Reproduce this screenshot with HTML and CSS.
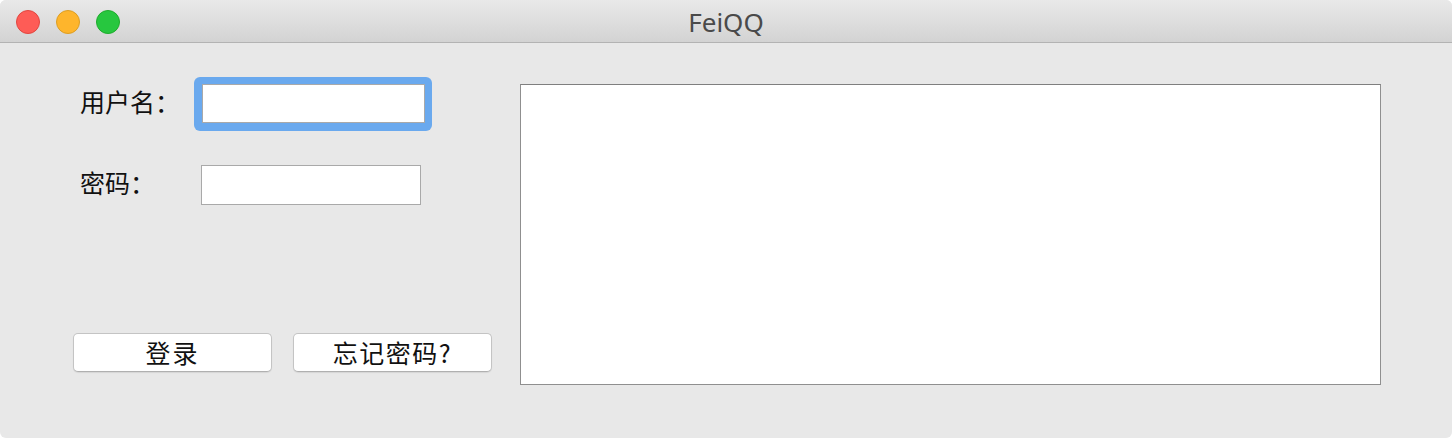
FILE: index.html
```html
<!DOCTYPE html>
<html lang="zh-CN">
<head>
<meta charset="utf-8">
<title>FeiQQ</title>
<link rel="stylesheet" href="styles.css">
</head>
<body>
<div class="window">
  <div class="titlebar">
    <div class="lights">
      <span class="light red"></span>
      <span class="light yellow"></span>
      <span class="light green"></span>
    </div>
    <div class="title">FeiQQ</div>
  </div>
  <div class="content">
    <div class="left">
      <div class="row row-user">
        <label class="label">用户名：</label>
        <span class="focus-ring"><input class="field field-user" type="text"></span>
      </div>
      <div class="row row-pass">
        <label class="label">密码：</label>
        <input class="field field-pass" type="password">
      </div>
      <div class="buttons">
        <button class="btn">登录</button>
        <button class="btn btn-wide">忘记密码?</button>
      </div>
    </div>
    <div class="textbox"></div>
  </div>
</div>
</body>
</html>
```

FILE: styles.css
```css
* { box-sizing: border-box; }
html, body {
  margin: 0;
  padding: 0;
  background: #ffffff;
}
body {
  font-family: "Noto Sans CJK SC", "Noto Sans", sans-serif;
  color: #000;
}
.window {
  width: 1452px;
  height: 438px;
  background: #e8e8e8;
  border-radius: 6px;
  overflow: hidden;
  display: flex;
  flex-direction: column;
}
.titlebar {
  height: 43px;
  flex: none;
  background: linear-gradient(#e9e9e9, #d3d3d3);
  border-bottom: 1px solid #b3b3b3;
  display: flex;
  align-items: center;
  position: relative;
}
.lights {
  display: flex;
  gap: 16px;
  padding-left: 16px;
  margin-top: 1px;
}
.light {
  width: 24px;
  height: 24px;
  border-radius: 50%;
  display: block;
}
.red { background: #fe5c56; border: 1px solid #e2463f; }
.yellow { background: #feb52c; border: 1px solid #dd9e22; }
.green { background: #27c73f; border: 1px solid #1eac2c; }
.title {
  position: absolute;
  left: 0;
  right: 0;
  top: 2px;
  bottom: 0;
  display: flex;
  align-items: center;
  justify-content: center;
  font-family: "Noto Sans", "Liberation Sans", sans-serif;
  font-size: 26px;
  color: #4a4a4a;
  pointer-events: none;
}
.content {
  flex: 1;
  display: flex;
  padding-left: 73px;
}
.left {
  width: 419px;
  display: flex;
  flex-direction: column;
}
.row {
  display: flex;
  align-items: center;
  padding-left: 7px;
}
.row-user { margin-top: 34px; }
.row-pass { margin-top: 34px; }
.label {
  font-size: 25px;
  line-height: 30px;
  margin-top: -6px;
  color: #111;
}
.row-user .label { width: 114px; }
.row-pass .label { width: 121px; }
.focus-ring {
  display: block;
  background: #6aa9ee;
  padding: 7px 7px 8px 8px;
  border-radius: 6px;
}
.field {
  display: block;
  margin: 0;
  background: #fff;
  border: 1px solid #a9a9a9;
  outline: none;
  padding: 0 4px;
  font-size: 18px;
}
.field-user { width: 223px; height: 39px; }
.field-pass { width: 220px; height: 40px; }
.buttons {
  display: flex;
  gap: 21px;
  margin-top: 128px;
}
.btn {
  width: 199px;
  height: 39px;
  background: #ffffff;
  border: 1px solid #c4c4c4;
  border-bottom-color: #b0b0b0;
  border-radius: 5px;
  box-shadow: 0 1px 1px rgba(0,0,0,0.08);
  font-family: "Noto Sans CJK SC", sans-serif;
  font-size: 25px;
  letter-spacing: 2px;
  line-height: 37px;
  padding: 0;
  color: #111;
}
.btn-wide {
  letter-spacing: 1.5px;
}
.textbox {
  margin-left: 28px;
  margin-top: 41px;
  width: 861px;
  height: 301px;
  background: #fff;
  border: 1px solid #8f8f8f;
  border-top-color: #7f7f7f;
}
```
